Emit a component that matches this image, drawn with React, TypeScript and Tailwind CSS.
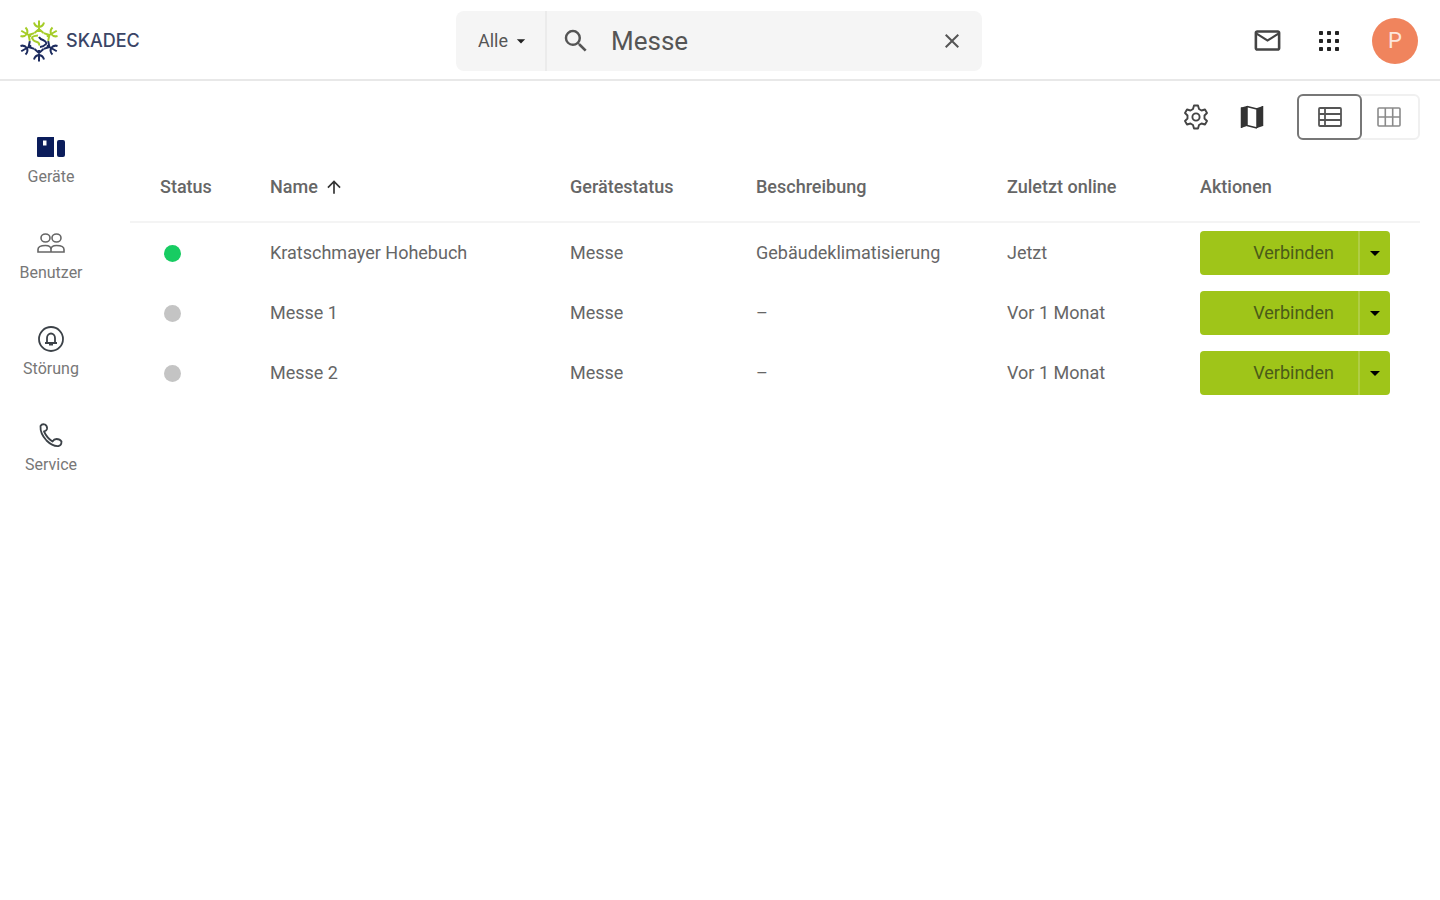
import { useState } from 'react';
import { MdArrowDropDown, MdArrowUpward, MdClose, MdMailOutline, MdSearch } from 'react-icons/md';

type Device = {
  id: number;
  online: boolean;
  name: string;
  state: string;
  description: string;
  lastSeen: string;
};

const devices: Device[] = [
  { id: 1, online: true, name: 'Kratschmayer Hohebuch', state: 'Messe', description: 'Gebäudeklimatisierung', lastSeen: 'Jetzt' },
  { id: 2, online: false, name: 'Messe 1', state: 'Messe', description: '–', lastSeen: 'Vor 1 Monat' },
  { id: 3, online: false, name: 'Messe 2', state: 'Messe', description: '–', lastSeen: 'Vor 1 Monat' },
];

const Snowflake = () => (
  <svg width="38" height="42" viewBox="-19 -21 38 42" fill="none" strokeWidth="2" aria-hidden="true">
    <defs>
      <path id="arm" d="M0 -9V-20.5M-5 -18.500Q-4 -14.500 0 -14Q4 -14.500 5 -18.500M-4.500 -8L0 -12L4.500 -8" />
    </defs>
    <g stroke="#a5cc28">
      <use href="#arm" />
      <use href="#arm" transform="rotate(-60)" />
      <use href="#arm" transform="rotate(60)" />
      <path d="M-1 -5.500Q-7 -5 -7 -3Q-6 0 -2 1Q1 2 0 4.500" />
    </g>
    <g stroke="#1c2b5e">
      <use href="#arm" transform="rotate(120)" />
      <use href="#arm" transform="rotate(180)" />
      <use href="#arm" transform="rotate(240)" />
      <path d="M0 -4Q1 -2 4 -1Q8 1 7 3Q5 5.500 1 6" />
    </g>
  </svg>
);

const DevicesIcon = () => (
  <svg width="30" height="24" viewBox="0 0 30 24" fill="#0b1d5b" aria-hidden="true">
    <path fillRule="evenodd" d="M2 2h16v20H2a1 1 0 0 1-1-1V3a1 1 0 0 1 1-1zm5 3.500v5h3.500v-5z" />
    <rect x="21" y="5" width="8" height="17" rx="2" />
  </svg>
);

const UsersIcon = () => (
  <svg width="30" height="24" viewBox="0 0 30 24" fill="none" stroke="#666" strokeWidth="1.6" aria-hidden="true">
    <ellipse cx="9.500" cy="7" rx="4.500" ry="4" />
    <ellipse cx="20.500" cy="7" rx="4.500" ry="4" />
    <path d="M2 21v-2.500q0-4 7.500-4q5.500 0 5.500 4v2.500zM15 21v-2.500q0-4 5.500-4q7.500 0 7.500 4v2.500z" />
  </svg>
);

const AlarmIcon = () => (
  <svg width="30" height="28" viewBox="0 0 30 28" fill="none" stroke="#3c4248" strokeWidth="1.8" aria-hidden="true">
    <circle cx="15" cy="14" r="12" />
    <path d="M9 18h12M11 18v-5a4 4.500 0 0 1 8 0v5" />
    <path d="M13 19.500h4" strokeWidth="2" />
  </svg>
);

const PhoneIcon = () => (
  <svg width="30" height="28" viewBox="0 0 30 28" fill="none" stroke="#3c4248" strokeWidth="1.8" strokeLinejoin="round" aria-hidden="true">
    <path d="M4.500 5q1.500-2.500 4.500-1.500q2.500 1.500 2 4.500q-.5 2-3 2.500q3 6.500 8.500 10q1.500-2.500 4-2.500q3.500 0 5 2.500q0 4-3 4.500q-6 .5-12-5.500q-6.500-7-6-14.500z" />
  </svg>
);

const AppsIcon = () => (
  <svg width="22" height="22" viewBox="0 0 22 22" fill="#222" aria-hidden="true">
    {[1, 9, 17].map((y) => [1, 9, 17].map((x) => <rect key={`${x}-${y}`} x={x} y={y} width="4" height="4" rx="0.8" />))}
  </svg>
);

const GearIcon = () => (
  <svg width="26" height="26" viewBox="0 0 26 26" fill="none" stroke="#444" strokeWidth="1.9" strokeLinejoin="round" aria-hidden="true">
    <path d="M11 1.500h4l1 3.500 2.500 1.500 3.500-1 2 3.500-2.500 2.500v3L24 17l-2 3.500-3.500-1L16 21l-1 3.500h-4L10 21l-2.500-1.500-3.500 1L2 17l2.500-2.500v-3L2 9l2-3.500 3.500 1L10 5z" />
    <circle cx="13" cy="13" r="3.600" />
  </svg>
);

const MapIcon = () => (
  <svg width="26" height="26" viewBox="0 0 26 26" aria-hidden="true">
    <path d="M2 3.500L8 2v20L2 24zM18 4l6-2v20l-6 2z" fill="#333" />
    <path d="M8 2.500l10 2.500M8 21.500l10 2.500M8 2v20M18 4v20M2.500 3.500V24M23.500 2v20" stroke="#333" strokeWidth="1.500" fill="none" />
  </svg>
);

const ListIcon = () => (
  <svg width="24" height="20" viewBox="0 0 24 20" fill="none" stroke="#555" strokeWidth="1.8" aria-hidden="true">
    <rect x="1" y="1" width="22" height="18" rx="1" />
    <path d="M7 1v18M1 7h22M1 13h22" />
  </svg>
);

const GridIcon = () => (
  <svg width="24" height="20" viewBox="0 0 24 20" fill="none" stroke="#8a8a8a" strokeWidth="1.6" aria-hidden="true">
    <rect x="1" y="1" width="22" height="18" rx="1" />
    <path d="M8.300 1v18M15.700 1v18M1 10h22" />
  </svg>
);

const navItems = [
  { label: 'Geräte', Icon: DevicesIcon },
  { label: 'Benutzer', Icon: UsersIcon },
  { label: 'Störung', Icon: AlarmIcon },
  { label: 'Service', Icon: PhoneIcon },
];

const Header = () => {
  const [query, setQuery] = useState('Messe');

  return (
    <header className="grid grid-cols-[1fr_526px_1fr] items-center h-[81px] pt-0.5 pl-5 pr-[22px] border-b-2 border-[#e8e8e8]">
      <a href="#" className="flex items-center gap-2 justify-self-start">
        <Snowflake />
        <span className="font-['Inter',sans-serif] text-lg font-medium text-[#3a4566]">SKADEC</span>
      </a>

      <form role="search" className="flex h-[60px] rounded-lg bg-[#f5f5f5]" onSubmit={(e) => e.preventDefault()}>
        <div className="relative w-[91px] border-r-2 border-[#ebebeb]">
          <select aria-label="Suchbereich" className="appearance-none w-full h-full pl-[22px] text-lg text-[#555] outline-none">
            <option>Alle</option>
          </select>
          <MdArrowDropDown className="absolute right-3.5 top-5 size-5 text-[#222] pointer-events-none" />
        </div>
        <button type="submit" aria-label="Suchen" className="pl-3.5">
          <MdSearch className="size-[30px] text-[#555]" />
        </button>
        <input
          aria-label="Suche"
          value={query}
          onChange={(e) => setQuery(e.target.value)}
          className="flex-1 min-w-0 pt-0.5 pl-5 text-[26px] text-[#555] outline-none"
        />
        <button type="button" aria-label="Suche leeren" className="px-[18px]" onClick={() => setQuery('')}>
          <MdClose className="size-6 text-[#555]" />
        </button>
      </form>

      <div className="flex items-center justify-self-end">
        <button aria-label="Nachrichten" className="mr-[35px]">
          <MdMailOutline className="size-[31px] text-[#444]" />
        </button>
        <button aria-label="Apps" className="mr-8">
          <AppsIcon />
        </button>
        <button aria-label="Profil" className="size-[46px] rounded-full bg-[#f0845d] text-[22px] text-[#fde6dc]">
          P
        </button>
      </div>
    </header>
  );
};

const Sidebar = () => (
  <nav className="w-[102px] shrink-0 pt-[50px]">
    <ul className="space-y-9">
      {navItems.map(({ label, Icon }) => (
        <li key={label}>
          <a href="#" className="flex flex-col items-center gap-0.5 h-[60px] text-base text-[#777]">
            <span className="flex items-center h-8">
              <Icon />
            </span>
            {label}
          </a>
        </li>
      ))}
    </ul>
  </nav>
);

const Toolbar = () => {
  const [view, setView] = useState('list');

  return (
    <div className="flex items-center justify-end h-[46px]">
      <button aria-label="Einstellungen" className="mr-[30px]">
        <GearIcon />
      </button>
      <button aria-label="Karte" className="mr-8">
        <MapIcon />
      </button>
      <div className="flex h-full rounded-md border-2 border-[#f0f0f0]">
        <button
          aria-label="Liste"
          aria-pressed={view === 'list'}
          onClick={() => setView('list')}
          className="flex items-center justify-center w-[65px] -m-0.5 rounded-md border-2 border-transparent aria-pressed:border-[#777]"
        >
          <ListIcon />
        </button>
        <button
          aria-label="Kacheln"
          aria-pressed={view === 'grid'}
          onClick={() => setView('grid')}
          className="flex items-center justify-center w-[62px] -m-0.5 rounded-md border-2 border-transparent aria-pressed:border-[#777]"
        >
          <GridIcon />
        </button>
      </div>
    </div>
  );
};

const ConnectButton = () => (
  <div className="flex w-[190px] h-11 rounded bg-[#9fc519] text-[#4b5c18]">
    <button className="flex-1 pr-6 text-right border-r-2 border-[#b0cd45]">Verbinden</button>
    <button aria-label="Weitere Aktionen" className="flex items-center justify-center w-[30px]">
      <MdArrowDropDown className="size-6 text-black" />
    </button>
  </div>
);

const DeviceTable = () => (
  <table className="w-full mt-3 table-fixed border-separate border-spacing-0 text-left text-lg text-[#666]">
    <colgroup>
      <col className="w-[110px]" />
      <col className="w-[300px]" />
      <col className="w-[186px]" />
      <col className="w-[251px]" />
      <col className="w-[193px]" />
      <col className="w-[250px]" />
    </colgroup>
    <thead>
      <tr className="h-[71px] *:border-b-2 *:border-[#f4f4f4] *:pl-[30px] *:font-medium">
        <th>Status</th>
        <th aria-sort="ascending">
          <button className="flex items-center gap-1.5">
            Name <MdArrowUpward className="size-5 text-[#333]" />
          </button>
        </th>
        <th>Gerätestatus</th>
        <th>Beschreibung</th>
        <th>Zuletzt online</th>
        <th>Aktionen</th>
      </tr>
    </thead>
    <tbody>
      {devices.map((device) => (
        <tr key={device.id} className="h-[60px] *:pl-[30px]">
          <td>
            <span
              role="img"
              aria-label={device.online ? 'Online' : 'Offline'}
              className={`block ml-1 size-[17px] rounded-full ${device.online ? 'bg-[#17cc62]' : 'bg-[#c4c4c4]'}`}
            />
          </td>
          <td>{device.name}</td>
          <td>{device.state}</td>
          <td>{device.description}</td>
          <td>{device.lastSeen}</td>
          <td>
            <ConnectButton />
          </td>
        </tr>
      ))}
    </tbody>
  </table>
);

export default function App() {
  return (
    <div className="min-h-screen bg-white font-['Roboto',sans-serif]">
      <Header />
      <div className="flex">
        <Sidebar />
        <main className="flex-1 min-w-0 pt-[13px] pl-7 pr-5">
          <Toolbar />
          <DeviceTable />
        </main>
      </div>
    </div>
  );
}
